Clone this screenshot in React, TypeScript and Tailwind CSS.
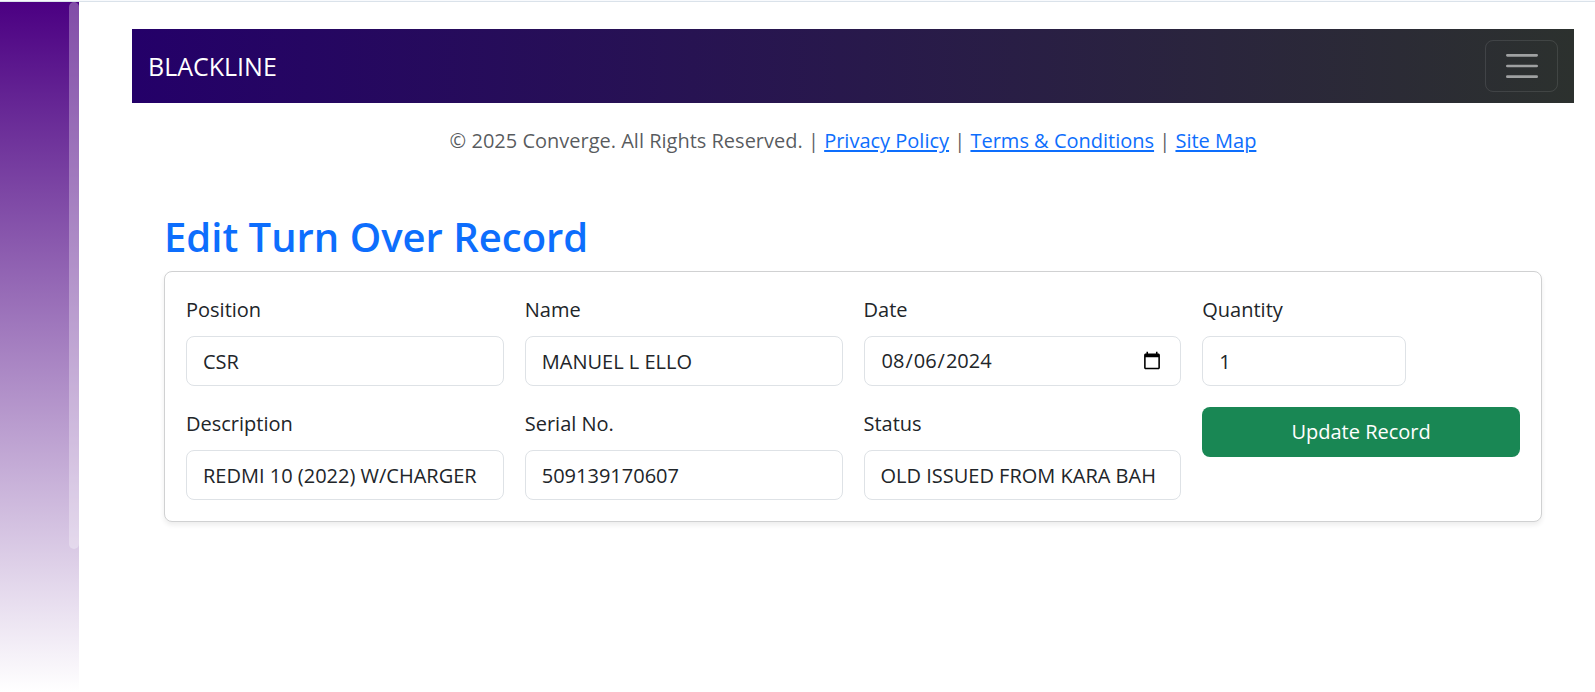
import React from "react";

const control =
  "block h-[50px] w-full rounded-lg border border-[#dee2e6] bg-white px-4 text-[20px] leading-[32px] text-[#212529] outline-none";

type FieldProps = {
  id: string;
  label: string;
  value: string;
  type?: string;
  narrow?: boolean;
};

function Field({ id, label, value, type = "text", narrow = false }: FieldProps) {
  return (
    <div className="min-w-0">
      <label htmlFor={id} className="mb-[9px] block leading-[34px]">
        {label}
      </label>
      <div className={narrow ? "w-[204px]" : "w-full"}>
        <input id={id} name={id} type={type} defaultValue={value} className={control} />
      </div>
    </div>
  );
}

const link = "text-[#0d6efd] underline decoration-2 underline-offset-2";

export default function App() {
  return (
    <div className="flex min-h-screen flex-col bg-white font-['Open_Sans',sans-serif] text-[20px] leading-[32px] text-[#212529]">
      <div className="h-[2px] border-b border-[#dae2ea] bg-[#f8fafd]" />
      <div className="flex grow">
        <aside className="flex w-[79px] shrink-0 justify-end bg-linear-to-b/srgb from-[#4b0082] to-white">
          <div className="h-[547px] w-[10px] rounded-full bg-white/30" />
        </aside>
        <main className="min-w-0 grow pt-[27px] pr-[21px] pl-[53px]">
          <nav className="flex h-[74px] items-center justify-between bg-linear-to-r/srgb from-[#240069] to-[#2c312e] px-4">
            <a href="#" className="text-[25px] leading-[40px] text-white">
              BLACKLINE
            </a>
            <button
              type="button"
              aria-label="Toggle navigation"
              className="flex h-[52px] w-[73px] items-center justify-center rounded-lg border border-white/10"
            >
              <svg width="40" height="40" viewBox="0 0 30 30" fill="none">
                <path
                  d="M4 7h22M4 15h22M4 23h22"
                  stroke="rgba(255,255,255,0.55)"
                  strokeWidth="2"
                  strokeLinecap="round"
                  strokeMiterlimit="10"
                />
              </svg>
            </button>
          </nav>
          <footer className="pt-[22px] text-center text-[#212529]/75">
            © 2025 Converge. All Rights Reserved. |{" "}
            <a href="#" className={link}>Privacy Policy</a> |{" "}
            <a href="#" className={link}>Terms &amp; Conditions</a> |{" "}
            <a href="#" className={link}>Site Map</a>
          </footer>
          <section className="px-8 pt-[54px]">
            <h1 className="mb-[9px] text-[40px] leading-[51px] font-semibold text-[#0d6efd]">
              Edit Turn Over Record
            </h1>
            <form
              onSubmit={(e) => e.preventDefault()}
              className="grid grid-cols-4 gap-[21px] rounded-lg border border-[#d0d1d2] bg-white p-[21px] shadow-[0_3px_5px_rgba(0,0,0,0.075)]"
            >
              <Field id="position" label="Position" value="CSR" />
              <Field id="name" label="Name" value="MANUEL L ELLO" />
              <Field id="date" label="Date" type="date" value="2024-08-06" />
              <Field id="quantity" label="Quantity" type="number" value="1" narrow />
              <Field id="description" label="Description" value="REDMI 10 (2022) W/CHARGER" />
              <Field id="serial" label="Serial No." value="509139170607" />
              <Field id="status" label="Status" value="OLD ISSUED FROM KARA BAH" />
              <button
                type="submit"
                className="h-[50px] self-start rounded-lg bg-[#198754] text-white"
              >
                Update Record
              </button>
            </form>
          </section>
        </main>
      </div>
    </div>
  );
}
